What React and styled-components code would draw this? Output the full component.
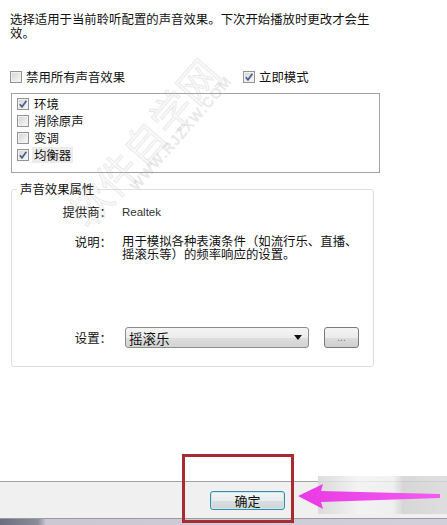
import React from 'react';
import styled, { createGlobalStyle } from 'styled-components';

const GlobalStyle = createGlobalStyle`
	html, body {
		margin: 0;
		padding: 0;
		background: #ffffff;
	}
	body {
		font-family: "Noto Sans CJK SC", "Noto Sans", sans-serif;
		font-size: 12.4px;
		color: #111;
	}
`;

const Page = styled.div`
	position: relative;
	width: 447px;
	height: 525px;
	overflow: hidden;
	display: flex;
	flex-direction: column;
	background: #fff;
`;

const Content = styled.div`
	flex: 1;
	width: 364px;
	padding: 12px 0 0 10px;
`;

const Intro = styled.p`
	margin: 0;
	line-height: 14px;
`;

const OptionsRow = styled.div`
	display: grid;
	grid-template-columns: 233px auto;
	margin-top: 30px;
	height: 14px;
`;

const Label = styled.label`
	display: flex;
	align-items: center;
	gap: 4px;
	line-height: 14px;
	white-space: nowrap;
`;

const Box = styled.span`
	position: relative;
	flex: none;
	width: 10px;
	height: 10px;
	border: 1px solid #939393;
	background: linear-gradient(135deg, #d4d4d4 0%, #e8e8e8 55%, #f8f8f8 100%);
	box-shadow: inset 0 0 0 1px #f1f1f1;
	svg {
		position: absolute;
		left: 0;
		top: 0;
	}
`;

const ListBox = styled.div`
	margin-top: 9px;
	width: 362px;
	height: 77px;
	margin-left: 1px;
	border: 1px solid #a3a3a3;
	padding: 1px 0 0 5px;
	box-sizing: content-box;
`;

const ListItem = styled.div`
	height: 17px;
	display: flex;
	align-items: center;
	gap: 3px;
`;

const ItemText = styled.span`
	padding: 1px 2px;
	line-height: 14px;
	background: ${(p) => (p.$selected ? '#ececec' : 'transparent')};
`;

const Group = styled.fieldset`
	margin: 9px 0 0 1px;
	width: 363px;
	height: 185px;
	box-sizing: border-box;
	border: 1px solid #dcdfe2;
	border-radius: 3px;
	padding: 9px 14px 18px 0;
	display: flex;
	flex-direction: column;
	legend {
		margin-left: 5px;
		padding: 0 3px;
		line-height: 14px;
	}
`;

const PropRow = styled.div`
	display: grid;
	grid-template-columns: 100px 1fr;
	column-gap: 10px;
	align-items: ${(p) => (p.$center ? 'center' : 'start')};
	margin-top: ${(p) => p.$top || 0}px;
	${(p) => p.$bottom && 'margin-top: auto;'}
`;

const PropLabel = styled.span`
	text-align: right;
	line-height: 14px;
`;

const PropValue = styled.span`
	line-height: ${(p) => p.$lh || 14}px;
	max-width: 240px;
	font-family: ${(p) => (p.$latin ? '"Liberation Sans", Arial, sans-serif' : 'inherit')};
	font-size: ${(p) => (p.$latin ? '11.5px' : 'inherit')};
	color: ${(p) => (p.$latin ? '#333' : 'inherit')};
`;

const SettingsLine = styled.div`
	display: flex;
	align-items: center;
	gap: 15px;
	margin-left: 3px;
`;

const Select = styled.div`
	width: 184px;
	height: 21px;
	box-sizing: border-box;
	border: 1px solid #8c8c8c;
	border-radius: 3px;
	background: linear-gradient(#f5f5f5 0%, #ececec 50%, #dedede 51%, #d3d3d3 100%);
	display: flex;
	align-items: center;
	justify-content: space-between;
	padding: 0 6px 0 3px;
	font-size: 13.5px;
`;

const Arrow = styled.span`
	width: 0;
	height: 0;
	border-left: 4px solid transparent;
	border-right: 4px solid transparent;
	border-top: 5px solid #111;
`;

const SmallButton = styled.button`
	width: 35px;
	height: 21px;
	border: 1px solid #7a7a7a;
	border-radius: 3px;
	background: linear-gradient(#f4f4f4 0%, #ebebeb 50%, #dddddd 51%, #cfcfcf 100%);
	color: #777;
	font-size: 10px;
	padding: 0;
	line-height: 20px;
	font-family: "Liberation Sans", Arial, sans-serif;
`;

const Footer = styled.div`
	height: 37px;
	flex: none;
	border-top: 1px solid #a2a2a2;
	background: #f0f0f0;
	padding: 9px 0 0 210px;
	box-sizing: border-box;
`;

const OkButton = styled.button`
	width: 75px;
	height: 19px;
	border: 1px solid #3c8aa8;
	border-radius: 3px;
	background: linear-gradient(#f2f5f6 0%, #e8eced 50%, #d9dfe1 51%, #cfd6d8 100%);
	box-shadow: inset 0 0 0 1px #c9eaf2;
	font-family: "Noto Sans CJK SC", sans-serif;
	font-size: 13px;
	line-height: 17px;
	padding: 0;
	color: #111;
`;

const BottomStrip = styled.div`
	height: 6px;
	flex: none;
	border-top: 1px solid #9c9c9c;
	background: linear-gradient(90deg, #6b6e80 0px, #8a8c9a 38px, #cbc8d4 46px, #d2cfda 100%);
`;

const Hidden = styled.div`
	position: absolute;
	left: 318px;
	top: 476px;
	width: 129px;
	height: 38px;
	background: linear-gradient(90deg, #d8d8d8 0px, #e4e4e4 20px, #f3f3f3 40px, #efefef 75px, #d2d2d2 85px, #dadada 125px);
	opacity: 0.85;
`;

const Highlight = styled.div`
	position: absolute;
	left: 182px;
	top: 454px;
	width: 112px;
	height: 69px;
	box-sizing: border-box;
	border: 3px solid #a72b30;
`;

const Pointer = styled.svg`
	position: absolute;
	left: 0;
	top: 0;
	pointer-events: none;
`;

const WatermarkAnchor = styled.div`
	position: absolute;
	left: ${(p) => p.$x}px;
	top: ${(p) => p.$y}px;
	width: 0;
	height: 0;
	pointer-events: none;
`;

const WatermarkText = styled.div`
	position: absolute;
	left: 0;
	top: 0;
	transform: translate(-50%, -50%) rotate(-49deg);
	font-size: ${(p) => p.$size}px;
	line-height: 1;
	color: rgba(200, 200, 200, 0.12);
	-webkit-text-stroke: 0.8px rgba(175, 175, 175, 0.28);
	white-space: nowrap;
	letter-spacing: ${(p) => p.$spacing || 0}px;
	font-family: ${(p) => (p.$latin ? '"Liberation Sans", Arial, sans-serif' : 'inherit')};
`;

const Check = ({ checked }) => (
	<Box>
		{checked && (
			<svg width="10" height="10" viewBox="0 0 10 10">
				<path d="M1.8 5.2 L4 7.8 L8.4 1.8" fill="none" stroke="#4b5f8c" strokeWidth="1.7" />
			</svg>
		)}
	</Box>
);

const effects = [
	{ name: '环境', checked: true },
	{ name: '消除原声', checked: false },
	{ name: '变调', checked: false },
	{ name: '均衡器', checked: true, selected: true },
];

const App = () => {
	return (
		<Page>
			<GlobalStyle />
			<Content>
				<Intro>选择适用于当前聆听配置的声音效果。下次开始播放时更改才会生效。</Intro>
				<OptionsRow>
					<Label>
						<Check checked={false} />
						禁用所有声音效果
					</Label>
					<Label>
						<Check checked />
						立即模式
					</Label>
				</OptionsRow>
				<ListBox>
					{effects.map((e) => (
						<ListItem key={e.name}>
							<Check checked={e.checked} />
							<ItemText $selected={e.selected}>{e.name}</ItemText>
						</ListItem>
					))}
				</ListBox>
				<Group>
					<legend>声音效果属性</legend>
					<PropRow>
						<PropLabel>提供商：</PropLabel>
						<PropValue $latin>Realtek</PropValue>
					</PropRow>
					<PropRow $top={16}>
						<PropLabel>说明：</PropLabel>
						<PropValue $lh={13}>用于模拟各种表演条件（如流行乐、直播、摇滚乐等）的频率响应的设置。</PropValue>
					</PropRow>
					<PropRow $bottom $center>
						<PropLabel>设置：</PropLabel>
						<SettingsLine>
							<Select>
								摇滚乐
								<Arrow />
							</Select>
							<SmallButton>...</SmallButton>
						</SettingsLine>
					</PropRow>
				</Group>
			</Content>
			<Footer>
				<OkButton>确定</OkButton>
			</Footer>
			<BottomStrip />
			<Hidden />
			<Highlight />
			<Pointer width="447" height="525" viewBox="0 0 447 525">
				<defs>
					<linearGradient id="mag" x1="0" x2="1" y1="0" y2="0">
						<stop offset="0" stopColor="#e83ae4" />
						<stop offset="1" stopColor="#f35cf0" />
					</linearGradient>
				</defs>
				<polygon
					points="298,496 323,484 321,491 440,494 440,498 321,502 323,509"
					fill="url(#mag)"
				/>
			</Pointer>
			<WatermarkAnchor $x={143} $y={142}>
				<WatermarkText $size={41}>软件自学网</WatermarkText>
			</WatermarkAnchor>
			<WatermarkAnchor $x={181} $y={133}>
				<WatermarkText $size={14} $latin $spacing={1.5}>WWW.RJZXW.COM</WatermarkText>
			</WatermarkAnchor>
		</Page>
	);
};

export default App;
